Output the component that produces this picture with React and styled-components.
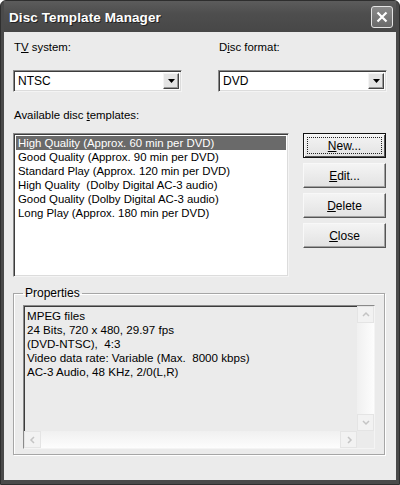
import React, { useState } from "react";
import styled, { createGlobalStyle } from "styled-components";

const templates = [
    "High Quality (Approx. 60 min per DVD)",
    "Good Quality (Approx. 90 min per DVD)",
    "Standard Play (Approx. 120 min per DVD)",
    "High Quality  (Dolby Digital AC-3 audio)",
    "Good Quality (Dolby Digital AC-3 audio)",
    "Long Play (Approx. 180 min per DVD)",
];

const properties = [
    "MPEG files",
    "24 Bits, 720 x 480, 29.97 fps",
    "(DVD-NTSC),  4:3",
    "Video data rate: Variable (Max.  8000 kbps)",
    "AC-3 Audio, 48 KHz, 2/0(L,R)",
];

const ArrowDown = () => (
    <svg width="7" height="4" viewBox="0 0 7 4">
        <path d="M0 0h7L3.5 4z" fill="#000" />
    </svg>
);

const Chevron = ({ dir }) => {
    const d = {
        up: "M1 5l3-3 3 3",
        down: "M1 2l3 3 3-3",
        left: "M5 1L2 4l3 3",
        right: "M3 1l3 3-3 3",
    }[dir];
    return (
        <svg width="8" height="8" viewBox="0 0 8 8">
            <path d={d} fill="none" stroke="#c4c4c4" strokeWidth="1.5" />
        </svg>
    );
};

const Combo = ({ value }) => (
    <ComboBox>
        <ComboValue>{value}</ComboValue>
        <ComboButton>
            <ArrowDown />
        </ComboButton>
    </ComboBox>
);

const App = () => {
    const [selected, setSelected] = useState(0);

    return (
        <>
            <GlobalStyle />
            <Window>
                <TitleBar>
                    <Title>Disc Template Manager</Title>
                    <CloseButton>
                        <svg width="12" height="12" viewBox="0 0 12 12">
                            <path d="M1.5 1.5l9 9M10.5 1.5l-9 9" stroke="#fff" strokeWidth="2.2" />
                        </svg>
                    </CloseButton>
                </TitleBar>
                <Body>
                    <TopRow>
                        <Field>
                            <Label>
                                T<u>V</u> system:
                            </Label>
                            <Combo value="NTSC" />
                        </Field>
                        <Field>
                            <Label>
                                D<u>i</u>sc format:
                            </Label>
                            <Combo value="DVD" />
                        </Field>
                    </TopRow>

                    <Label>
                        Available disc <u>t</u>emplates:
                    </Label>
                    <MiddleRow>
                        <ListBox>
                            {templates.map((t, i) => (
                                <ListItem key={i} $active={i === selected} onClick={() => setSelected(i)}>
                                    {t}
                                </ListItem>
                            ))}
                        </ListBox>
                        <ButtonColumn>
                            <Button $default>
                                <Focus>
                                    <u>N</u>ew...
                                </Focus>
                            </Button>
                            <Button>
                                <u>E</u>dit...
                            </Button>
                            <Button>
                                <u>D</u>elete
                            </Button>
                            <Button>
                                <u>C</u>lose
                            </Button>
                        </ButtonColumn>
                    </MiddleRow>

                    <Group>
                        <Legend>Properties</Legend>
                        <PropsBox>
                            <PropsText>
                                {properties.map((p, i) => (
                                    <div key={i}>{p}</div>
                                ))}
                            </PropsText>
                            <VScroll>
                                <ScrollBtn>
                                    <Chevron dir="up" />
                                </ScrollBtn>
                                <ScrollBtn>
                                    <Chevron dir="down" />
                                </ScrollBtn>
                            </VScroll>
                            <HScroll>
                                <ScrollBtn>
                                    <Chevron dir="left" />
                                </ScrollBtn>
                                <ScrollBtn>
                                    <Chevron dir="right" />
                                </ScrollBtn>
                            </HScroll>
                            <Corner />
                        </PropsBox>
                    </Group>
                </Body>
            </Window>
        </>
    );
};

export default App;

const GlobalStyle = createGlobalStyle`
    body {
        margin: 0;
        background: #fff;
        font-family: "Liberation Sans", Arial, sans-serif;
    }
`;

const Window = styled.div`
    width: 400px;
    height: 485px;
    box-sizing: border-box;
    background: #4a4a4a;
    border: 1px solid #2e2e2e;
    border-radius: 6px 6px 0 0;
    display: flex;
    flex-direction: column;
    padding: 0 3px 4px;
`;

const TitleBar = styled.div`
    height: 31px;
    display: flex;
    align-items: center;
    justify-content: space-between;
    padding: 0 3px 0 5px;
    background: linear-gradient(#5c5c5c, #4e4e4e 40%, #474747);
`;

const Title = styled.div`
    color: #fff;
    font-family: "Liberation Sans", Arial, sans-serif;
    font-weight: bold;
    font-size: 13.5px;
    letter-spacing: 0.1px;
    text-shadow: 1px 1px 0 #222;
    padding-top: 2px;
`;

const CloseButton = styled.div`
    width: 22px;
    height: 22px;
    box-sizing: border-box;
    border: 1px solid #e4e4e4;
    border-radius: 3px;
    background: linear-gradient(#8a8a8a, #6a6a6a);
    display: flex;
    align-items: center;
    justify-content: center;
    margin-top: 1px;
`;

const Body = styled.div`
    flex: 1;
    background: #ebebeb;
    padding: 6px 10px 0 9px;
    font-size: 11.4px;
    color: #000;
    display: flex;
    flex-direction: column;
`;

const TopRow = styled.div`
    display: grid;
    grid-template-columns: 169px 169px;
    column-gap: 36px;
    margin-bottom: 14px;
`;

const Field = styled.div`
    display: flex;
    flex-direction: column;
`;

const Label = styled.div`
    height: 15px;
    line-height: 15px;
    margin: 2px 0 15px 1px;
`;

const ComboBox = styled.div`
    height: 22px;
    box-sizing: border-box;
    background: #fff;
    border: 1px solid;
    border-color: #8a8a8a #f4f4f4 #f4f4f4 #8a8a8a;
    box-shadow: inset 1px 1px 0 #3c3c3c, inset -1px -1px 0 #dcdcdc;
    display: flex;
    align-items: center;
    padding: 2px;
`;

const ComboValue = styled.div`
    flex: 1;
    padding-left: 2px;
    font-size: 12px;
`;

const ComboButton = styled.div`
    width: 16px;
    height: 16px;
    box-sizing: border-box;
    background: #e4e4e4;
    border: 1px solid;
    border-color: #f4f4f4 #444 #444 #f4f4f4;
    box-shadow: inset -1px -1px 0 #9a9a9a;
    display: flex;
    align-items: center;
    justify-content: center;
`;

const MiddleRow = styled.div`
    display: flex;
    gap: 13px;
    margin-top: -5px;
    margin-bottom: 9px;
`;

const ListBox = styled.div`
    width: 280px;
    height: 144px;
    box-sizing: border-box;
    background: #fff;
    border: 1px solid;
    border-color: #8a8a8a #f4f4f4 #f4f4f4 #8a8a8a;
    box-shadow: inset 1px 1px 0 #3c3c3c, inset -1px -1px 0 #dcdcdc;
    padding: 2px;
`;

const ListItem = styled.div`
    height: 14px;
    line-height: 14px;
    padding-left: 2px;
    white-space: pre;
    background: ${(p) => (p.$active ? "#6a6a6a" : "transparent")};
    color: ${(p) => (p.$active ? "#fff" : "#000")};
`;

const ButtonColumn = styled.div`
    display: flex;
    flex-direction: column;
    gap: 5px;
    padding-left: 1px;
`;

const Button = styled.div`
    width: 83px;
    height: 25px;
    box-sizing: border-box;
    background: linear-gradient(#f4f4f4, #e2e2e2);
    border: 1px solid;
    border-color: ${(p) => (p.$default ? "#111" : "#f8f8f8 #555 #555 #f8f8f8")};
    box-shadow: ${(p) =>
        p.$default ? "inset 1px 1px 0 #f8f8f8, inset -1px -1px 0 #555" : "inset -1px -1px 0 #a0a0a0"};
    display: flex;
    align-items: center;
    justify-content: center;
    padding: 3px;
    font-size: 12px;
`;

const Focus = styled.div`
    align-self: stretch;
    flex: 1;
    border: 1px dotted #222;
    display: flex;
    align-items: center;
    justify-content: center;
`;

const Group = styled.fieldset`
    margin: 0 1px 0 0;
    padding: 5px 9px 6px 9px;
    height: 169px;
    box-sizing: border-box;
    border: 1px solid #a6a6a6;
    box-shadow: 1px 1px 0 #fff, inset 1px 1px 0 #fff;
`;

const Legend = styled.legend`
    padding: 0 2px;
    margin-left: 0;
    font-size: 12px;
    line-height: 14px;
`;

const PropsBox = styled.div`
    position: relative;
    height: 144px;
    box-sizing: border-box;
    border: 1px solid;
    border-color: #8a8a8a #f4f4f4 #f4f4f4 #8a8a8a;
    box-shadow: inset 1px 1px 0 #3c3c3c;
    background: #ebebeb;
    display: grid;
    grid-template-columns: 1fr 17px;
    grid-template-rows: 1fr 17px;
`;

const PropsText = styled.div`
    padding: 3px 3px;
    line-height: 14px;
    white-space: pre;
    font-size: 11.6px;
`;

const VScroll = styled.div`
    display: flex;
    flex-direction: column;
    justify-content: space-between;
    background: linear-gradient(90deg, #f0f0f0, #fdfdfd);
`;

const HScroll = styled.div`
    display: flex;
    justify-content: space-between;
    background: linear-gradient(#f0f0f0, #fdfdfd);
`;

const ScrollBtn = styled.div`
    width: 17px;
    height: 17px;
    box-sizing: border-box;
    border: 1px solid #e4e4e4;
    background: #f2f2f2;
    display: flex;
    align-items: center;
    justify-content: center;
`;

const Corner = styled.div`
    background: #ebebeb;
`;
